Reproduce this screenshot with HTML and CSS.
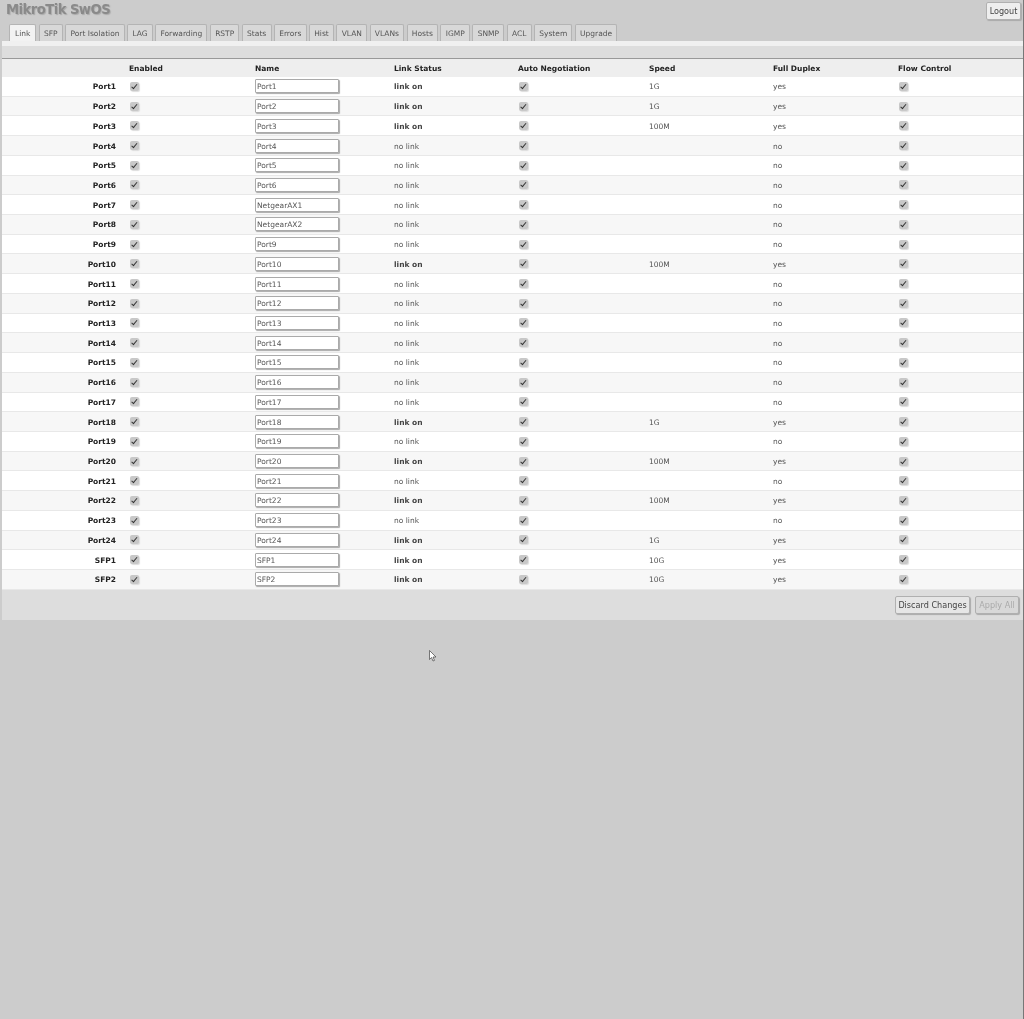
FILE: index.html
```html
<!DOCTYPE html>
<html lang="en">
<head>
<meta charset="utf-8">
<title>MikroTik SwOS</title>
<link rel="stylesheet" href="styles.css">
</head>
<body>
<div class="page">
<header class="top">
  <div class="brand-row">
    <h1 class="brand">MikroTik SwOS</h1>
    <button class="btn logout">Logout</button>
  </div>
  <nav class="tabs">
    <a class="tab active">Link</a><a class="tab">SFP</a><a class="tab">Port Isolation</a><a class="tab">LAG</a><a class="tab">Forwarding</a><a class="tab">RSTP</a><a class="tab">Stats</a><a class="tab">Errors</a><a class="tab">Hist</a><a class="tab">VLAN</a><a class="tab">VLANs</a><a class="tab">Hosts</a><a class="tab">IGMP</a><a class="tab">SNMP</a><a class="tab">ACL</a><a class="tab">System</a><a class="tab">Upgrade</a>
  </nav>
</header>
<main class="panel">
  <div class="strip"></div>
  <div class="row head"><span></span><span>Enabled</span><span>Name</span><span>Link Status</span><span>Auto Negotiation</span><span>Speed</span><span>Full Duplex</span><span>Flow Control</span></div>
  <div class="row"><b class="port">Port1</b><i class="cb"></i><span class="nm">Port1</span><b class="st">link on</b><i class="cb"></i><span>1G</span><span>yes</span><i class="cb"></i></div>
  <div class="row"><b class="port">Port2</b><i class="cb"></i><span class="nm">Port2</span><b class="st">link on</b><i class="cb"></i><span>1G</span><span>yes</span><i class="cb"></i></div>
  <div class="row"><b class="port">Port3</b><i class="cb"></i><span class="nm">Port3</span><b class="st">link on</b><i class="cb"></i><span>100M</span><span>yes</span><i class="cb"></i></div>
  <div class="row"><b class="port">Port4</b><i class="cb"></i><span class="nm">Port4</span><span>no link</span><i class="cb"></i><span></span><span>no</span><i class="cb"></i></div>
  <div class="row"><b class="port">Port5</b><i class="cb"></i><span class="nm">Port5</span><span>no link</span><i class="cb"></i><span></span><span>no</span><i class="cb"></i></div>
  <div class="row"><b class="port">Port6</b><i class="cb"></i><span class="nm">Port6</span><span>no link</span><i class="cb"></i><span></span><span>no</span><i class="cb"></i></div>
  <div class="row"><b class="port">Port7</b><i class="cb"></i><span class="nm">NetgearAX1</span><span>no link</span><i class="cb"></i><span></span><span>no</span><i class="cb"></i></div>
  <div class="row"><b class="port">Port8</b><i class="cb"></i><span class="nm">NetgearAX2</span><span>no link</span><i class="cb"></i><span></span><span>no</span><i class="cb"></i></div>
  <div class="row"><b class="port">Port9</b><i class="cb"></i><span class="nm">Port9</span><span>no link</span><i class="cb"></i><span></span><span>no</span><i class="cb"></i></div>
  <div class="row"><b class="port">Port10</b><i class="cb"></i><span class="nm">Port10</span><b class="st">link on</b><i class="cb"></i><span>100M</span><span>yes</span><i class="cb"></i></div>
  <div class="row"><b class="port">Port11</b><i class="cb"></i><span class="nm">Port11</span><span>no link</span><i class="cb"></i><span></span><span>no</span><i class="cb"></i></div>
  <div class="row"><b class="port">Port12</b><i class="cb"></i><span class="nm">Port12</span><span>no link</span><i class="cb"></i><span></span><span>no</span><i class="cb"></i></div>
  <div class="row"><b class="port">Port13</b><i class="cb"></i><span class="nm">Port13</span><span>no link</span><i class="cb"></i><span></span><span>no</span><i class="cb"></i></div>
  <div class="row"><b class="port">Port14</b><i class="cb"></i><span class="nm">Port14</span><span>no link</span><i class="cb"></i><span></span><span>no</span><i class="cb"></i></div>
  <div class="row"><b class="port">Port15</b><i class="cb"></i><span class="nm">Port15</span><span>no link</span><i class="cb"></i><span></span><span>no</span><i class="cb"></i></div>
  <div class="row"><b class="port">Port16</b><i class="cb"></i><span class="nm">Port16</span><span>no link</span><i class="cb"></i><span></span><span>no</span><i class="cb"></i></div>
  <div class="row"><b class="port">Port17</b><i class="cb"></i><span class="nm">Port17</span><span>no link</span><i class="cb"></i><span></span><span>no</span><i class="cb"></i></div>
  <div class="row"><b class="port">Port18</b><i class="cb"></i><span class="nm">Port18</span><b class="st">link on</b><i class="cb"></i><span>1G</span><span>yes</span><i class="cb"></i></div>
  <div class="row"><b class="port">Port19</b><i class="cb"></i><span class="nm">Port19</span><span>no link</span><i class="cb"></i><span></span><span>no</span><i class="cb"></i></div>
  <div class="row"><b class="port">Port20</b><i class="cb"></i><span class="nm">Port20</span><b class="st">link on</b><i class="cb"></i><span>100M</span><span>yes</span><i class="cb"></i></div>
  <div class="row"><b class="port">Port21</b><i class="cb"></i><span class="nm">Port21</span><span>no link</span><i class="cb"></i><span></span><span>no</span><i class="cb"></i></div>
  <div class="row"><b class="port">Port22</b><i class="cb"></i><span class="nm">Port22</span><b class="st">link on</b><i class="cb"></i><span>100M</span><span>yes</span><i class="cb"></i></div>
  <div class="row"><b class="port">Port23</b><i class="cb"></i><span class="nm">Port23</span><span>no link</span><i class="cb"></i><span></span><span>no</span><i class="cb"></i></div>
  <div class="row"><b class="port">Port24</b><i class="cb"></i><span class="nm">Port24</span><b class="st">link on</b><i class="cb"></i><span>1G</span><span>yes</span><i class="cb"></i></div>
  <div class="row"><b class="port">SFP1</b><i class="cb"></i><span class="nm">SFP1</span><b class="st">link on</b><i class="cb"></i><span>10G</span><span>yes</span><i class="cb"></i></div>
  <div class="row"><b class="port">SFP2</b><i class="cb"></i><span class="nm">SFP2</span><b class="st">link on</b><i class="cb"></i><span>10G</span><span>yes</span><i class="cb"></i></div>
  <footer class="actions">
    <button class="btn discard">Discard Changes</button>
    <button class="btn off">Apply All</button>
  </footer>
</main>
<svg class="cursor" width="8" height="12" viewBox="0 0 8 12"><path d="M.5.5v9l2-2 1.5 3.5 1.5-.6L4 7h3z" fill="#fff" stroke="#444" stroke-width=".7"/></svg>
</div>
</body>
</html>
```
FILE: styles.css
```css
* { box-sizing: border-box; }
html, body { margin: 0; background: #ccc; }
body { font-family: "DejaVu Sans", sans-serif; font-size: 7.5px; color: #555; }
.page { position: relative; height: 1019px; filter: blur(.35px); overflow: hidden; border-right: 1px solid #777; }

.top { height: 41px; display: flex; flex-direction: column; }
.brand-row { height: 24px; display: flex; justify-content: space-between; align-items: flex-start; padding: 2px 2px 0 6px; }
.brand { margin: 0; font-size: 13.2px; line-height: 16px; letter-spacing: -.55px; font-weight: bold; color: #8a8a8a; text-shadow: 1px 1px 1px #aaa; }

.btn { height: 18px; padding: 0; font: inherit; font-size: 8.1px; white-space: nowrap; color: #444; background: #e6e6e6; border: 1px solid #b0b0b0; border-radius: 2px; box-shadow: 1px 1px 1px #aaa; }
.btn.off { color: #aaa; background: #d8d8d8; }
.logout { width: 35px; background: #eee; }
.discard { width: 75px; }
.off { width: 44px; }

.tabs { display: flex; gap: 2.4px; padding-left: 9px; height: 17px; }
.tab { display: block; height: 17px; padding: 3.5px 4.25px 0; color: #555; line-height: 10px; background: #d8d8d8; border: 1px solid #b4b4b4; border-bottom: 0; border-radius: 2px 2px 0 0; }
.tab.active { background: #f2f2f2; padding-left: 5px; padding-right: 5px; }

.panel { margin: 0 0 0 2px; height: 579px; background: #ddd; border-top: 5px solid #f0f0f0; display: flex; flex-direction: column; }
.strip { height: 13px; flex: none; border-bottom: 1px solid #999; }

.row { display: grid; grid-template-columns: 114px 126px 139px 124px 131px 124px 125px 1fr; align-items: center; flex: none; height: 19.72px; background: #fff; border-bottom: 1px solid #e8e8e8; }
.row:nth-child(even) { background: #f7f7f7; }
.row > * { padding: 1px 0 0 13px; font-style: normal; }
.row > .port { padding: 1px 0 0; text-align: right; color: #222; }
.row > .st { color: #444; }
.head { height: 18px; background: #eee !important; color: #222; font-weight: bold; border-bottom: 0; }

.row > .cb { display: block; position: relative; width: 9px; height: 9px; margin-left: 14px; padding: 0; background: #c8c8c8; border-radius: 2px; box-shadow: 1px 1px 1px #ddd; }
.cb::after { content: ""; position: absolute; left: 3.2px; top: 1px; width: 2px; height: 4.5px; border-right: 1.3px solid #333; border-bottom: 1.3px solid #333; transform: rotate(40deg); }

.row > .nm { display: block; width: 84px; height: 14px; margin-left: 13px; padding: 1px 1px 0; color: #555; line-height: 11px; background: #fff; border: 1px solid #aaa; border-radius: 1px; box-shadow: 1px 1px 1px #aaa; }

.actions { flex: 1; display: flex; justify-content: flex-end; align-items: flex-start; gap: 5px; padding: 6px 4px 0 0; }
.cursor { position: absolute; left: 429px; top: 650px; }
```
